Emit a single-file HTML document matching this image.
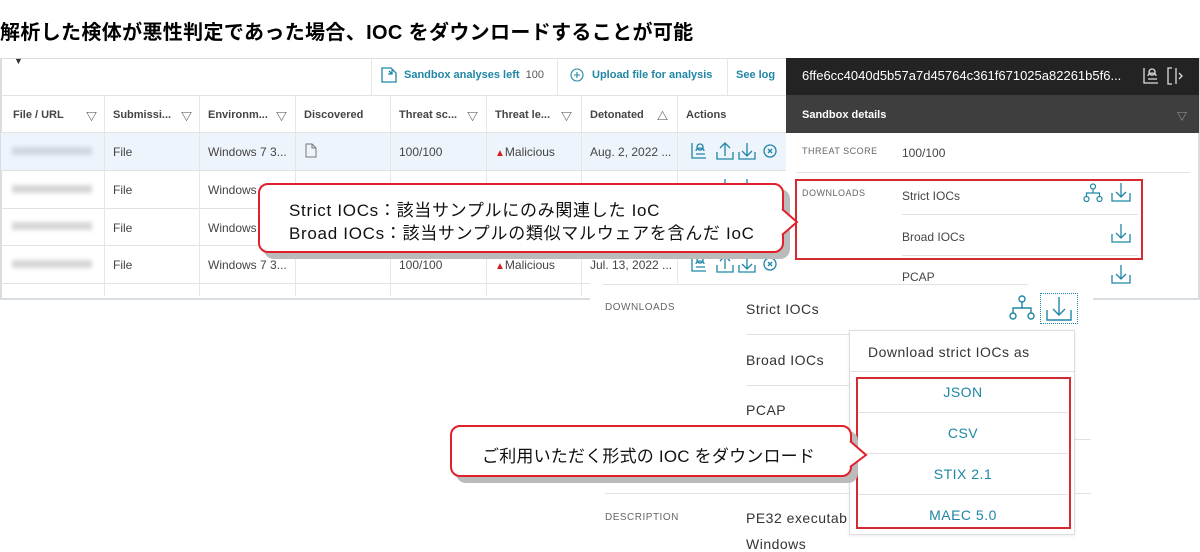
<!DOCTYPE html>
<html><head><meta charset="utf-8"><style>
*{margin:0;padding:0;box-sizing:border-box}
body{width:1200px;height:551px;background:#fff;position:relative;overflow:hidden;font-family:"Liberation Sans","Noto Sans CJK JP",sans-serif;color:#333}
.a{position:absolute;white-space:nowrap}
.t{font-size:12px;color:#444}
.h{font-size:11px;color:#444;font-weight:bold}
.lab{font-size:9px;color:#666;letter-spacing:.5px}
.teal{color:#1f86a6}
.ln{position:absolute;height:1px;background:#e2e2e2}
.vl{position:absolute;width:1px;background:#e6e6e6}
.call{position:absolute;border:2px solid #e0202a;border-radius:10px;background:#fff;box-shadow:6px 6px 0 #bbb;font-size:17px;color:#111;letter-spacing:.5px}
</style></head><body>
<div class="a" style="left:0;top:16px;font-size:20px;font-weight:bold;color:#000;letter-spacing:0.35px">解析した検体が悪性判定であった場合、IOC をダウンロードすることが可能</div>

<!-- table frame -->
<div style="position:absolute;left:0;top:58px;width:1200px;height:242px;border:2px solid #d8dde2;border-top:1px solid #d8dde2;background:#fff"></div>
<div class="a" style="left:14px;top:56px;font-size:9px">▼</div>
<div style="position:absolute;left:1px;top:95px;width:785px;height:38px;border-top:1px solid #e3e3e3;border-bottom:1px solid #e3e3e3"></div>
<div style="position:absolute;left:1px;top:133px;width:785px;height:37px;background:#eef4fc"></div>
<div class="ln" style="left:1px;top:170px;width:785px"></div>
<div class="ln" style="left:1px;top:208px;width:785px"></div>
<div class="ln" style="left:1px;top:245px;width:785px"></div>
<div class="ln" style="left:1px;top:283px;width:785px"></div>
<div class="vl" style="left:371px;top:58px;height:37px"></div>
<div class="vl" style="left:557px;top:58px;height:37px"></div>
<div class="vl" style="left:727px;top:58px;height:37px"></div>
<div class="vl" style="left:104px;top:96px;height:200px"></div>
<div class="vl" style="left:199px;top:96px;height:200px"></div>
<div class="vl" style="left:295px;top:96px;height:200px"></div>
<div class="vl" style="left:390px;top:96px;height:200px"></div>
<div class="vl" style="left:486px;top:96px;height:200px"></div>
<div class="vl" style="left:581px;top:96px;height:200px"></div>
<div class="vl" style="left:677px;top:96px;height:200px"></div>

<svg class="a" style="left:381px;top:67px" width="16" height="16" viewBox="0 0 16 16" fill="none" stroke="#1f86a6" stroke-width="1.3"><path d="M1 1h9l5 5v9H1z M8 4l3 3 M11 3v4H7"/></svg>
<div class="a teal" style="left:404px;top:69px;font-size:11px;font-weight:bold">Sandbox analyses left <span style="color:#555;font-weight:normal">&nbsp;100</span></div>
<svg class="a" style="left:570px;top:68px" width="14" height="14" viewBox="0 0 14 14" fill="none" stroke="#1f86a6" stroke-width="1.1"><circle cx="7" cy="7" r="6"/><path d="M7 4v6M4 7h6"/></svg>
<div class="a teal" style="left:592px;top:69px;font-size:11px;font-weight:bold">Upload file for analysis</div>
<div class="a teal" style="left:736px;top:69px;font-size:11px;font-weight:bold">See log</div>

<div class="a h" style="left:13px;top:109px">File / URL</div><div class="a h" style="left:86px;top:108px">▽</div>
<div class="a h" style="left:113px;top:109px">Submissi...</div><div class="a h" style="left:181px;top:108px">▽</div>
<div class="a h" style="left:208px;top:109px">Environm...</div><div class="a h" style="left:276px;top:108px">▽</div>
<div class="a h" style="left:304px;top:109px">Discovered</div>
<div class="a h" style="left:399px;top:109px">Threat sc...</div><div class="a h" style="left:467px;top:108px">▽</div>
<div class="a h" style="left:495px;top:109px">Threat le...</div><div class="a h" style="left:561px;top:108px">▽</div>
<div class="a h" style="left:590px;top:109px">Detonated</div><div class="a h" style="left:657px;top:108px">△</div>
<div class="a h" style="left:686px;top:109px">Actions</div>

<div class="a" style="left:12px;top:147px;width:80px;height:8px;background:#cfd6e0;filter:blur(2px)"></div>
<div class="a" style="left:12px;top:185px;width:80px;height:8px;background:#d6d6d6;filter:blur(2px)"></div>
<div class="a" style="left:12px;top:222px;width:80px;height:8px;background:#d6d6d6;filter:blur(2px)"></div>
<div class="a" style="left:12px;top:260px;width:80px;height:8px;background:#d6d6d6;filter:blur(2px)"></div>

<div class="a t" style="left:113px;top:145px">File</div>
<div class="a t" style="left:113px;top:183px">File</div>
<div class="a t" style="left:113px;top:221px">File</div>
<div class="a t" style="left:113px;top:258px">File</div>
<div class="a t" style="left:208px;top:145px">Windows 7 3...</div>
<div class="a t" style="left:208px;top:183px">Windows 7</div>
<div class="a t" style="left:208px;top:221px">Windows</div>
<div class="a t" style="left:208px;top:258px">Windows 7 3...</div>
<svg class="a" style="left:305px;top:143px" width="12" height="15" viewBox="0 0 12 15" fill="none" stroke="#777"><path d="M1 1h6l4 4v9H1z M7 1v4h4"/></svg>
<div class="a t" style="left:399px;top:145px">100/100</div>
<div class="a t" style="left:399px;top:258px">100/100</div>
<div class="a t" style="left:495px;top:145px"><span style="color:#d42020;font-size:10px">▲</span>Malicious</div>
<div class="a t" style="left:495px;top:258px"><span style="color:#d42020;font-size:10px">▲</span>Malicious</div>
<div class="a t" style="left:590px;top:145px">Aug. 2, 2022 ...</div>
<div class="a t" style="left:590px;top:258px">Jul. 13, 2022 ...</div>

<svg class="a" style="left:690px;top:141px" width="90" height="20" viewBox="0 0 90 20" fill="none" stroke="#1f86a6" stroke-width="1.3">
<path d="M2 2v15h14 M6 13h9 M6 10c0-4 8-4 8 0 M10 3a3 3 0 1 0 0.1 0"/>
<path d="M27 11v7h16v-7 M35 15V2 M30 7l5-5 5 5"/>
<path d="M49 11v7h16v-7 M57 2v13 M52 10l5 5 5-5"/>
<circle cx="80" cy="10" r="6"/><path d="M78 8l4 4M82 8l-4 4"/></svg>
<svg class="a" style="left:690px;top:254px" width="90" height="20" viewBox="0 0 90 20" fill="none" stroke="#1f86a6" stroke-width="1.3">
<path d="M2 2v15h14 M6 13h9 M6 10c0-4 8-4 8 0 M10 3a3 3 0 1 0 0.1 0"/>
<path d="M27 11v7h16v-7 M35 15V2 M30 7l5-5 5 5"/>
<path d="M49 11v7h16v-7 M57 2v13 M52 10l5 5 5-5"/>
<circle cx="80" cy="10" r="6"/><path d="M78 8l4 4M82 8l-4 4"/></svg>
<svg class="a" style="left:690px;top:179px" width="70" height="6" viewBox="0 0 70 6" fill="none" stroke="#1f86a6" stroke-width="1.3"><path d="M35 6V0 M57 0v6"/></svg>

<div class="a" style="left:786px;top:58px;width:413px;height:37px;background:#232323"></div>
<div class="a" style="left:802px;top:68px;font-size:13px;color:#fff">6ffe6cc4040d5b57a7d45764c361f671025a82261b5f6...</div>
<svg class="a" style="left:1142px;top:66px" width="42" height="20" viewBox="0 0 42 20" fill="none" stroke="#ddd" stroke-width="1.3"><path d="M2 2v15h14 M6 13h9 M6 10c0-4 8-4 8 0 M10 3a3 3 0 1 0 0.1 0"/><path d="M30 2h-4v16h4 M34 2v16 M37 7l3 3-3 3"/></svg>
<div class="a" style="left:786px;top:95px;width:413px;height:38px;background:#3e3e3e"></div>
<div class="a" style="left:802px;top:109px;font-size:11px;color:#fff;font-weight:bold">Sandbox details</div>
<div class="a" style="left:1177px;top:108px;font-size:10px;color:#bbb">▽</div>
<div class="a lab" style="left:802px;top:146px">THREAT SCORE</div>
<div class="a t" style="left:902px;top:146px">100/100</div>
<div class="ln" style="left:796px;top:172px;width:394px"></div>
<div class="a lab" style="left:802px;top:188px">DOWNLOADS</div>
<div class="a t" style="left:902px;top:189px">Strict IOCs</div>
<div class="ln" style="left:902px;top:214px;width:236px"></div>
<div class="a t" style="left:902px;top:230px">Broad IOCs</div>
<div class="ln" style="left:902px;top:255px;width:236px"></div>
<div class="a t" style="left:902px;top:270px">PCAP</div>
<svg class="a" style="left:1083px;top:183px" width="20" height="20" viewBox="0 0 20 20" fill="none" stroke="#1f86a6" stroke-width="1.2"><circle cx="10" cy="3.5" r="2.5"/><circle cx="3.5" cy="16" r="2.5"/><circle cx="16.5" cy="16" r="2.5"/><path d="M10 6v4M3.5 13.5V10h13v3.5"/></svg>
<svg class="a" style="left:1110px;top:181px" width="22" height="22" viewBox="0 0 22 22" fill="none" stroke="#1f86a6" stroke-width="1.3"><path d="M2 12v8h18v-8 M11 2v14 M6 11l5 5 5-5"/></svg>
<svg class="a" style="left:1110px;top:222px" width="22" height="22" viewBox="0 0 22 22" fill="none" stroke="#1f86a6" stroke-width="1.3"><path d="M2 12v8h18v-8 M11 2v14 M6 11l5 5 5-5"/></svg>
<svg class="a" style="left:1110px;top:263px" width="22" height="22" viewBox="0 0 22 22" fill="none" stroke="#1f86a6" stroke-width="1.3"><path d="M2 12v8h18v-8 M11 2v14 M6 11l5 5 5-5"/></svg>
<div class="a" style="left:795px;top:179px;width:348px;height:81px;border:2px solid #d42a30"></div>

<div class="a" style="left:590px;top:283px;width:503px;height:268px;background:#fff"></div>
<div class="ln" style="left:603px;top:284px;width:425px"></div>
<div class="a lab" style="left:605px;top:302px;font-size:10px">DOWNLOADS</div>
<div class="a" style="left:746px;top:301px;font-size:14px;color:#333;letter-spacing:.5px">Strict IOCs</div>
<div class="ln" style="left:746px;top:334px;width:105px"></div>
<div class="a" style="left:746px;top:352px;font-size:14px;color:#333;letter-spacing:.5px">Broad IOCs</div>
<div class="ln" style="left:746px;top:385px;width:105px"></div>
<div class="a" style="left:746px;top:402px;font-size:14px;color:#333;letter-spacing:.5px">PCAP</div>
<div class="ln" style="left:746px;top:439px;width:345px"></div>
<div class="ln" style="left:605px;top:493px;width:486px"></div>
<div class="a lab" style="left:605px;top:512px;font-size:10px">DESCRIPTION</div>
<div class="a" style="left:746px;top:510px;font-size:14px;color:#333;letter-spacing:.5px">PE32 executab</div>
<div class="a" style="left:746px;top:536px;font-size:14px;color:#333;letter-spacing:.5px">Windows</div>
<svg class="a" style="left:1009px;top:295px" width="26" height="26" viewBox="0 0 26 26" fill="none" stroke="#1f86a6" stroke-width="1.4"><circle cx="13" cy="4" r="3"/><circle cx="4" cy="21" r="3"/><circle cx="22" cy="21" r="3"/><path d="M13 7v6M4 18v-5h18v5"/></svg>
<div class="a" style="left:1040px;top:293px;width:38px;height:31px;border:1px dotted #1f86a6"></div>
<svg class="a" style="left:1044px;top:295px" width="30" height="28" viewBox="0 0 30 28" fill="none" stroke="#1f86a6" stroke-width="1.4"><path d="M3 15v10h24V15 M15 2v18 M9 14l6 6 6-6"/></svg>
<div class="a" style="left:849px;top:330px;width:226px;height:205px;border:1px solid #ddd;background:#fff;box-shadow:0 1px 3px rgba(0,0,0,.08)"></div>
<div class="a" style="left:868px;top:344px;font-size:14px;color:#333;letter-spacing:.5px">Download strict IOCs as</div>
<div class="ln" style="left:850px;top:371px;width:224px"></div>
<div class="ln" style="left:858px;top:412px;width:210px"></div>
<div class="ln" style="left:858px;top:453px;width:210px"></div>
<div class="ln" style="left:858px;top:494px;width:210px"></div>
<div class="a teal" style="left:858px;top:384px;width:210px;text-align:center;font-size:14px;letter-spacing:.5px">JSON</div>
<div class="a teal" style="left:858px;top:425px;width:210px;text-align:center;font-size:14px;letter-spacing:.5px">CSV</div>
<div class="a teal" style="left:858px;top:466px;width:210px;text-align:center;font-size:14px;letter-spacing:.5px">STIX 2.1</div>
<div class="a teal" style="left:858px;top:507px;width:210px;text-align:center;font-size:14px;letter-spacing:.5px">MAEC 5.0</div>
<div class="a" style="left:856px;top:377px;width:215px;height:152px;border:2px solid #d42a30"></div>

<div class="call" style="left:258px;top:183px;width:526px;height:70px"></div>
<svg class="a" style="left:780px;top:205px" width="20" height="40" viewBox="0 0 20 40"><path d="M2 4 L17 17 L2 30" fill="#fff" stroke="#e0202a" stroke-width="2"/><rect x="0" y="6" width="3" height="22" fill="#fff"/></svg>
<div class="a" style="left:289px;top:199px;font-size:17px;color:#111;letter-spacing:.7px;line-height:23px">Strict IOCs：該当サンプルにのみ関連した IoC<br>Broad IOCs：該当サンプルの類似マルウェアを含んだ IoC</div>

<div class="call" style="left:450px;top:425px;width:402px;height:52px"></div>
<svg class="a" style="left:848px;top:438px" width="22" height="34" viewBox="0 0 22 34"><path d="M2 3 L18 17 L2 29" fill="#fff" stroke="#e0202a" stroke-width="2"/><rect x="0" y="5" width="3" height="22" fill="#fff"/></svg>
<div class="a" style="left:482px;top:442px;font-size:17px;color:#111;letter-spacing:.2px">ご利用いただく形式の IOC をダウンロード</div>
</body></html>
